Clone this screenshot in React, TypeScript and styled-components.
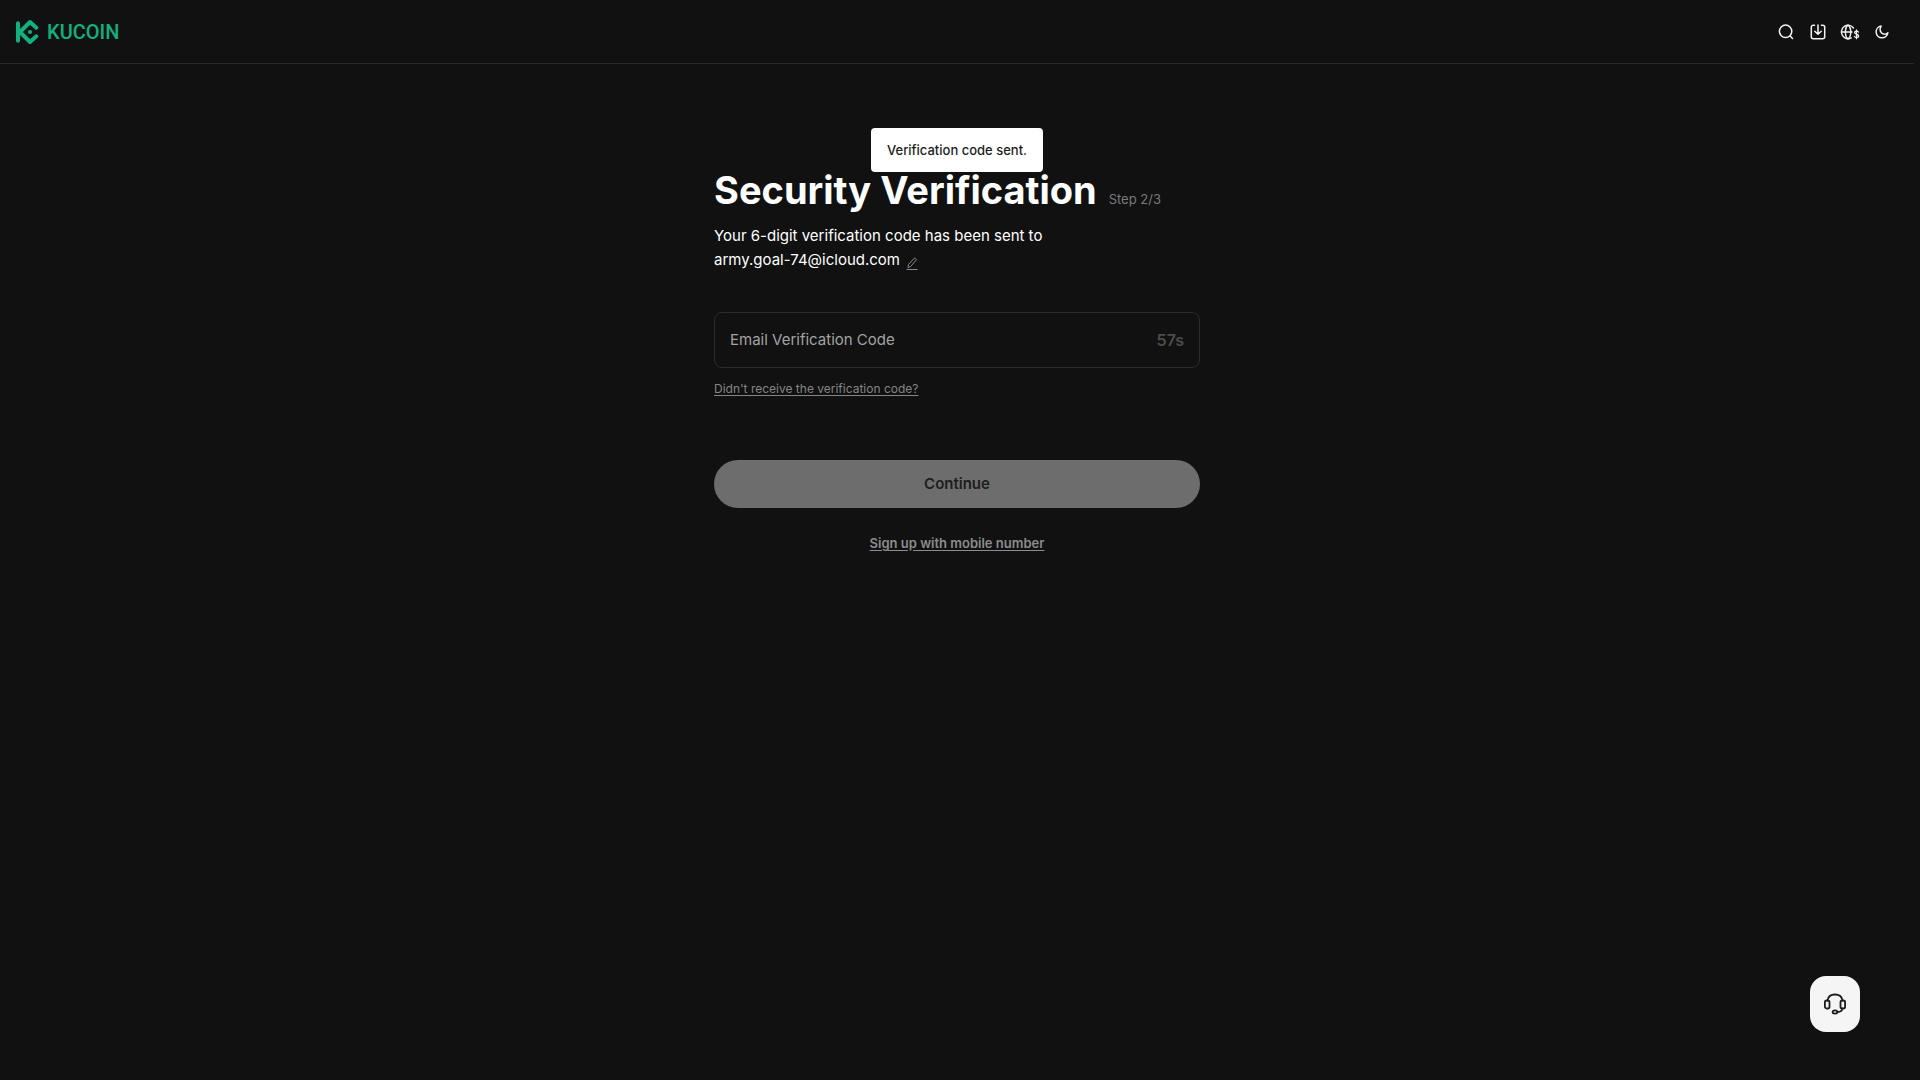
import React, { useState } from "react";
import styled, { createGlobalStyle } from "styled-components";

const GlobalStyle = createGlobalStyle`
  *, *::before, *::after { box-sizing: border-box; }
  html { background: #111; }
  body {
    margin: 0;
    background: #111;
    color: #fff;
    font-family: Inter, "Liberation Sans", sans-serif;
  }
  button, input { font-family: inherit; }
`;

const Page = styled.div`
  min-height: 100vh;
  margin-right: 6px;
`;

const Header = styled.header`
  display: flex;
  align-items: center;
  justify-content: space-between;
  height: 64px;
  padding: 0 22px 0 16px;
  border-bottom: 1px solid #292929;
`;

const Brand = styled.a`
  display: flex;
  align-items: center;
  gap: 8px;
  color: #11b07e;
  font-family: Roboto, "Liberation Sans", sans-serif;
  font-size: 20px;
  font-weight: 500;
  line-height: 24px;
  text-decoration: none;
`;

const Tools = styled.nav`
  display: flex;
  align-items: center;
  gap: 12px;
`;

const IconButton = styled.button`
  display: flex;
  align-items: center;
  justify-content: center;
  min-width: 20px;
  height: 20px;
  padding: 0;
  border: 0;
  background: none;
  color: #f3f3f3;
  cursor: pointer;
`;

const Toast = styled.div`
  position: absolute;
  top: 128px;
  left: calc(50% - 3px);
  transform: translateX(-50%);
  padding: 12px 16px;
  border-radius: 4px;
  background: #fff;
  color: #1d1d1d;
  font-size: 13px;
  font-weight: 500;
  line-height: 20px;
  white-space: nowrap;
`;

const Main = styled.main`
  width: 100%;
  max-width: 486px;
  margin: 0 auto;
  padding-top: 100px;
`;

const Heading = styled.div`
  display: flex;
  align-items: baseline;
  gap: 12px;
  white-space: nowrap;
`;

const Title = styled.h1`
  margin: 0;
  font-size: 38px;
  font-weight: 700;
  line-height: 52px;
`;

const Step = styled.span`
  color: #7a7a7a;
  font-size: 13px;
`;

const Description = styled.p`
  margin: 8px 0 0;
  font-size: 15px;
  line-height: 24px;
`;

const Recipient = styled.span`
  display: flex;
  align-items: center;
  gap: 5px;
`;

const EditButton = styled(IconButton)`
  min-width: 14px;
  height: 24px;
  padding-top: 8px;
  color: #8a8a8a;
`;

const Field = styled.div`
  display: flex;
  align-items: center;
  height: 56px;
  margin-top: 40px;
  padding: 0 15px;
  border: 1px solid #2b2b2b;
  border-radius: 8px;
`;

const CodeInput = styled.input`
  flex: 1;
  min-width: 0;
  padding: 0;
  border: 0;
  outline: 0;
  background: none;
  color: #fff;
  font-size: 15px;
  line-height: 24px;
  &::placeholder { color: #a3a3a3; opacity: 1; }
`;

const Countdown = styled.span`
  color: #4c4c4c;
  font-size: 16px;
  font-weight: 600;
  line-height: 24px;
`;

const HelpLink = styled.a`
  display: table;
  margin-top: 12px;
  color: #858585;
  font-size: 12px;
  line-height: 18px;
  text-underline-offset: 2px;
`;

const Submit = styled.button`
  display: block;
  width: 100%;
  height: 48px;
  margin-top: 62px;
  padding: 0 24px 2px;
  border: 0;
  border-radius: 24px;
  background: #6d6d6d;
  color: #1d1d1d;
  font-size: 15px;
  font-weight: 600;
`;

const AlternateLink = styled(HelpLink)`
  margin: 24px auto 0;
  color: #8c8c8c;
  font-size: 13px;
  font-weight: 600;
  line-height: 22px;
`;

const SupportButton = styled.button`
  position: fixed;
  right: 60px;
  bottom: 48px;
  display: flex;
  align-items: center;
  justify-content: center;
  width: 50px;
  height: 56px;
  padding: 0;
  border: 0;
  border-radius: 16px;
  background: #f5f5f5;
  color: #1d1d1d;
  cursor: pointer;
`;

const LogoMark = () => (
  <svg width="23" height="26" viewBox="0 0 23 26" fill="none" stroke="currentColor" strokeWidth="4" strokeLinecap="round" strokeLinejoin="round" aria-hidden="true">
    <path d="M2 4.200v17.600" />
    <path d="M20.300 8.700 14 3 4 13l10 10 6.300-5.700" />
    <circle cx="14" cy="13" r="2.100" fill="currentColor" stroke="none" />
  </svg>
);

const SearchIcon = () => (
  <svg width="18" height="18" viewBox="0 0 18 18" fill="none" stroke="currentColor" strokeWidth="1.5" strokeLinecap="round" aria-hidden="true">
    <circle cx="8.6" cy="8.3" r="6.2" />
    <path d="m13.2 13 2.3 2.4" />
  </svg>
);

const DownloadIcon = () => (
  <svg width="18" height="18" viewBox="0 0 18 18" fill="none" stroke="currentColor" strokeWidth="1.5" strokeLinecap="round" strokeLinejoin="round" aria-hidden="true">
    <path d="M5.500 2.200H4.300a2 2 0 0 0-2 2v9.500a2 2 0 0 0 2 2h9.400a2 2 0 0 0 2-2V4.200a2 2 0 0 0-2-2h-1.200M9 2v9M5.800 8.200 9 11.300l3.200-3.100" />
  </svg>
);

const LocaleIcon = () => (
  <svg width="20" height="18" viewBox="0 0 20 18" fill="none" stroke="currentColor" strokeWidth="1.4" strokeLinecap="round" aria-hidden="true">
    <path d="M13.500 5A6.700 6.700 0 1 0 11.300 14.900M1.200 9h10.800" />
    <path d="M7.500 2.300c-3 3.400-3 10 0 13.400M8.500 2.300c1.700 1.700 2.400 4 2.400 6.700s-.7 5-2.400 6.700" />
    <path d="M18.400 9c-.4-.6-1-.8-1.900-.8-1.200 0-1.900.5-1.900 1.400 0 2.200 4 1.100 4 3.300 0 1-.8 1.500-2.100 1.500-1 0-1.700-.3-2.100-.9M16.500 6.900v8.800" strokeWidth="1.300" />
  </svg>
);

const MoonIcon = () => (
  <svg width="18" height="18" viewBox="0 0 18 18" fill="none" stroke="currentColor" strokeWidth="1.5" strokeLinecap="round" strokeLinejoin="round" aria-hidden="true">
    <path d="M8.200 3.100A5.900 5.900 0 1 0 14.900 9.700c-2 2-5 1.800-6.500 0-1.500-1.900-1.600-4.600-.2-6.600Z" />
  </svg>
);

const EditIcon = () => (
  <svg width="14" height="14" viewBox="0 0 14 14" fill="none" stroke="currentColor" strokeWidth="1" strokeLinejoin="round" aria-hidden="true">
    <path d="m3 10.500.4-2.900 5.700-6.200c.8-.8 2.800.8 2 1.800l-5.600 6.400L3 10.500ZM1.500 12.500h11" />
  </svg>
);

const HeadsetIcon = () => (
  <svg width="24" height="24" viewBox="0 0 24 24" fill="none" stroke="currentColor" strokeWidth="1.8" strokeLinecap="round" strokeLinejoin="round" aria-hidden="true">
    <path d="M4.500 8.500C5 4.800 8 2.500 12 2.500s7 2.300 7.500 6" />
    <rect x="1.900" y="8.500" width="4.600" height="8" rx="1.800" />
    <rect x="17.500" y="8.500" width="4.600" height="8" rx="1.800" />
    <path d="M19.200 16.500c0 2.400-1.400 3.500-4.800 3.500" />
    <ellipse cx="12" cy="20" rx="2.400" ry="1.600" />
  </svg>
);

export default function App() {
  const [code, setCode] = useState("");

  return (
    <>
      <GlobalStyle />
      <Page>
        <Header>
          <Brand href="#">
            <LogoMark />
            KUCOIN
          </Brand>
          <Tools aria-label="Tools">
            <IconButton aria-label="Search"><SearchIcon /></IconButton>
            <IconButton aria-label="Download"><DownloadIcon /></IconButton>
            <IconButton aria-label="Language and currency"><LocaleIcon /></IconButton>
            <IconButton aria-label="Theme"><MoonIcon /></IconButton>
          </Tools>
        </Header>
        <Main>
          <Heading>
            <Title>Security Verification</Title>
            <Step>Step 2/3</Step>
          </Heading>
          <Description>
            Your 6-digit verification code has been sent to
            <Recipient>
              army.goal-74@icloud.com
              <EditButton aria-label="Edit email"><EditIcon /></EditButton>
            </Recipient>
          </Description>
          <Field>
            <CodeInput
              aria-label="Email Verification Code"
              placeholder="Email Verification Code"
              inputMode="numeric"
              value={code}
              onChange={(event) => setCode(event.target.value)}
            />
            <Countdown>57s</Countdown>
          </Field>
          <HelpLink href="#">Didn't receive the verification code?</HelpLink>
          <Submit disabled>Continue</Submit>
          <AlternateLink href="#">Sign up with mobile number</AlternateLink>
        </Main>
      </Page>
      <Toast role="status">Verification code sent.</Toast>
      <SupportButton aria-label="Customer support"><HeadsetIcon /></SupportButton>
    </>
  );
}
